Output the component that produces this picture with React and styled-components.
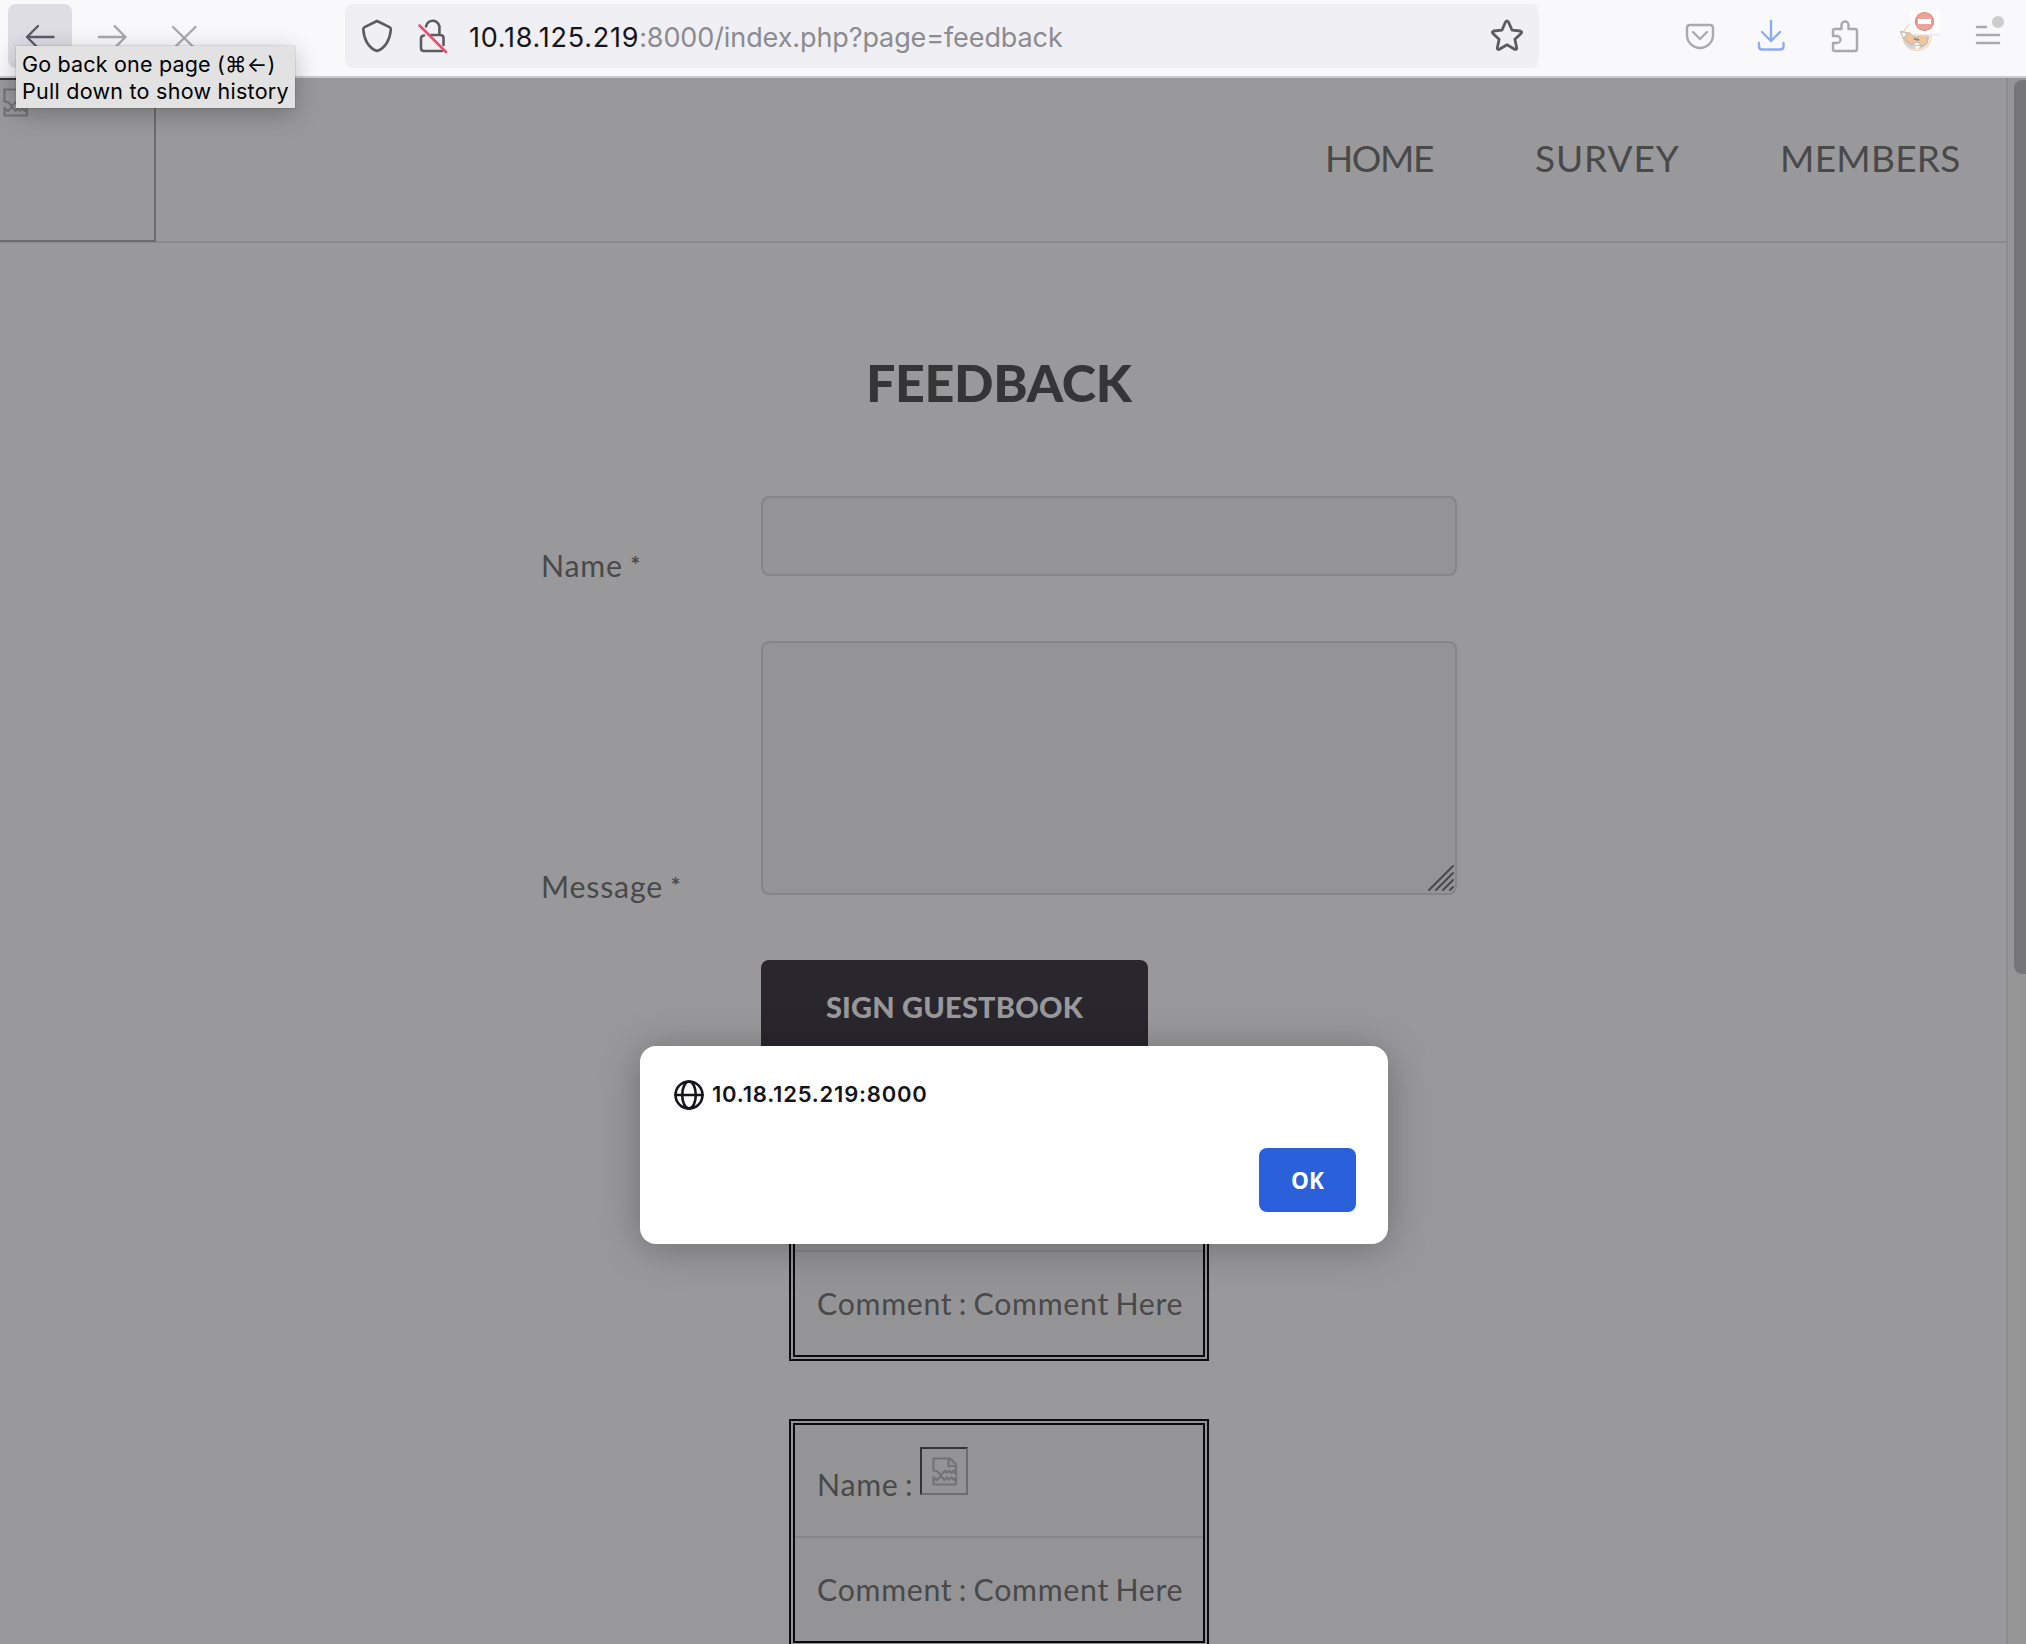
import React from "react";
import styled, { createGlobalStyle } from "styled-components";

const Global = createGlobalStyle`
  * { box-sizing: border-box; }
  html, body { margin: 0; padding: 0; overflow: hidden; }
  body { background: #99999b; }
`;

const ui = `Inter, "Liberation Sans", sans-serif`;
const site = `Lato, "Open Sans", sans-serif`;

const Window = styled.div`
  position: relative;
  display: flex;
  flex-direction: column;
  width: 2026px;
  height: 1644px;
  overflow: hidden;
  background: #99999b;
`;

const Toolbar = styled.div`
  flex: none;
  display: flex;
  height: 78px;
  padding: 4px 0 0 8px;
  background: #f9f9fb;
  border-bottom: 2px solid #cbcbcd;
`;

const NavButton = styled.div`
  flex: none;
  display: flex;
  align-items: center;
  justify-content: center;
  width: 64px;
  height: 64px;
  margin-right: 8px;
  border-radius: 8px;
  background: ${(p) => (p.$active ? "#dedde3" : "transparent")};
  color: ${(p) => (p.$active ? "#5b5b66" : "#a9a9ac")};
`;

const AddressBar = styled.div`
  flex: none;
  display: flex;
  align-items: center;
  width: 1194px;
  height: 64px;
  margin-left: 121px;
  padding: 0 14px 0 14px;
  border-radius: 8px;
  background: #f0eff4;
  color: #5b5b60;
`;

const Url = styled.div`
  flex: 1;
  margin-left: 19px;
  padding-top: 3px;
  white-space: nowrap;
  font: 400 27px/61px ${ui};
  color: #8b8b90;
  letter-spacing: -0.1px;
`;

const Host = styled.span`
  color: #15141a;
  letter-spacing: 0.75px;
`;

const Extensions = styled.div`
  display: flex;
  align-items: center;
  height: 64px;
  margin-left: 137px;
  gap: 24px;
  color: #a9a9ae;
`;

const Glyph = styled.svg`
  display: block;
  flex: none;
  width: ${(p) => p.$size || 48}px;
  height: ${(p) => p.$size || 48}px;
  margin-left: ${(p) => p.$indent || 0}px;
  overflow: visible;
  fill: none;
  color: ${(p) => p.$tone || "inherit"};
  stroke: currentColor;
  stroke-width: ${(p) => p.$weight || 2.4};
  stroke-linecap: round;
  stroke-linejoin: ${(p) => p.$join || "round"};
`;

const Tooltip = styled.div`
  position: absolute;
  left: 16px;
  top: 46px;
  width: 279px;
  height: 62px;
  padding: 5px 0 0 6px;
  background: #e2e2e3;
  box-shadow: 0 0 1px rgba(0, 0, 0, 0.45), 0 6px 24px rgba(0, 0, 0, 0.25);
  font: 400 21.5px/27px ${ui};
  color: #000;
  white-space: nowrap;
`;

const TipLine = styled.div`
  letter-spacing: ${(p) => p.$track};
`;

const Viewport = styled.div`
  flex: 1;
  display: flex;
  min-height: 0;
`;

const Page = styled.div`
  width: 2006px;
  font-family: ${site};
  color: #49494a;
`;

const Scrollbar = styled.div`
  width: 20px;
  padding: 2px 0 0 6px;
  border-left: 2px solid #8c8c8e;
  background: #969697;
`;

const Thumb = styled.div`
  height: 894px;
  width: 20px;
  border-radius: 8px;
  background: #767678;
`;

const Header = styled.header`
  display: flex;
  justify-content: space-between;
  height: 165px;
  border-bottom: 2px solid #89898b;
`;

const Logo = styled.div`
  width: 156px;
  height: 164px;
  padding: 8px 3px;
  border-style: solid;
  border-color: #343435 #6d6d6f #6d6d6f transparent;
  border-width: 2px 2px 2px 0;
`;

const Menu = styled.nav`
  display: flex;
  padding-top: 50px;
`;

const MenuLink = styled.a`
  width: ${(p) => p.$width}px;
  font-size: 37px;
  line-height: 60px;
  letter-spacing: ${(p) => p.$track};
`;

const Title = styled.h1`
  width: 262px;
  margin: 107px 0 0 866px;
  font-size: 52px;
  line-height: 64px;
  font-weight: 900;
  letter-spacing: -0.35px;
  color: #353536;
  white-space: nowrap;
`;

const Form = styled.form`
  display: flex;
  flex-direction: column;
  margin: 82px 0 0 541px;
`;

const Row = styled.div`
  display: flex;
  align-items: flex-end;
  height: ${(p) => p.$height}px;
  margin-bottom: 65px;
`;

const Label = styled.label`
  width: 220px;
  margin-bottom: ${(p) => p.$drop}px;
  font-size: 30.3px;
  line-height: 36px;
  letter-spacing: 0.8px;
  word-spacing: -1px;
`;

const Star = styled.span`
  font-size: 23px;
  font-weight: 700;
  line-height: 1;
  vertical-align: 4px;
`;

const Field = styled.div`
  display: flex;
  align-items: flex-end;
  justify-content: flex-end;
  width: 696px;
  height: 100%;
  padding: 1px;
  border: 2px solid #868688;
  border-radius: 8px;
  background: #949496;
`;

const Submit = styled.div`
  width: 387px;
  height: 96px;
  margin-left: 220px;
  border-radius: 8px;
  background: #29262d;
  color: #99999b;
  text-align: center;
  font-weight: 900;
  font-size: 29px;
  line-height: 94px;
  letter-spacing: 0.2px;
`;

const Entries = styled.section`
  display: flex;
  flex-direction: column;
  gap: 58px;
  margin: 77px 0 0 789px;
`;

const Entry = styled.div`
  width: 420px;
  height: 228px;
  border: 6px double #0b0b0d;
  background: #949496;
  white-space: nowrap;
  font-size: 30.3px;
  letter-spacing: 0.7px;
  word-spacing: -2px;
`;

const EntryName = styled.div`
  display: flex;
  height: 113px;
  padding: 22px 0 0 22px;
  border-bottom: 2px solid #868688;
  line-height: 74px;
`;

const NameText = styled.span`
  width: 96px;
`;

const EntryText = styled.div`
  padding-left: 22px;
  line-height: 102px;
`;

const Broken = styled.div`
  width: 48px;
  height: 48px;
  margin-left: 7px;
  padding: 8px 10px;
  border: 2px solid;
  border-color: #343435 #6d6d6f #6d6d6f #343435;
`;

const Dialog = styled.div`
  position: absolute;
  left: 640px;
  top: 1046px;
  width: 748px;
  height: 198px;
  display: flex;
  flex-direction: column;
  justify-content: space-between;
  padding: 34px 32px 32px 34px;
  border-radius: 16px;
  background: #fff;
  box-shadow: 0 4px 40px rgba(0, 0, 0, 0.28);
`;

const Origin = styled.div`
  display: flex;
  align-items: center;
  gap: 8px;
  height: 30px;
  color: #15141a;
`;

const OriginText = styled.span`
  padding-bottom: 2px;
  font: 600 22px/28px ${ui};
  letter-spacing: 0.8px;
`;

const Ok = styled.div`
  align-self: flex-end;
  width: 97px;
  height: 64px;
  padding-top: 1px;
  border-radius: 8px;
  background: #2a61da;
  color: #fff;
  text-align: center;
  font: 700 22.5px/64px "Open Sans", sans-serif;
`;

const BrokenImage = () => (
  <Glyph $size={28} $weight={2.2} $join="miter" $tone="#737375" viewBox="0 0 28 28">
    <path d="M1.500 13.500V1.500H18l6 6V17l-2.500-3-2 2-2.500-2-2 1.500-2-1.500-4.500 4-3-3.500zM16.500 1.500V9H24" />
    <path d="M1.500 27.500v-7l3.500 2.500 4-4 3.500 4 2.500-2.500 2 2 2.500-2 2 2 2.500-1.500v6.500z" />
  </Glyph>
);

export default function App() {
  return (
    <Window>
      <Global />
      <Toolbar>
        <NavButton $active>
          <Glyph viewBox="0 0 48 48"><path d="M37.500 25H11M22 14L11 25l11 11" /></Glyph>
        </NavButton>
        <NavButton>
          <Glyph viewBox="0 0 48 48"><path d="M11 25h26.500M26.500 14l11 11-11 11" /></Glyph>
        </NavButton>
        <NavButton>
          <Glyph viewBox="0 0 48 48"><path d="M13 15l22.500 22M35.500 15L13 37" /></Glyph>
        </NavButton>
        <AddressBar>
          <Glyph $size={36} viewBox="0 0 36 36" $weight={2.6}>
            <path d="M18 3l12.500 6.200q1.500.8 1.300 2.300C31.200 20.500 27 30 18 33 9 30 4.800 20.500 4.300 11.500q-.2-1.500 1.300-2.300z" />
          </Glyph>
          <Glyph $size={36} $indent={19} viewBox="0 0 36 36" $weight={2.6}>
            <path d="M10 17.500q-3 .3-3 3V30q0 3 3 3h18M17 17h9.500q3 .3 3 3v7M12 8.500a6.600 6.600 0 0 1 13.400 2V17" />
            <path d="M5.500 7.500L32 34" stroke="#e9506e" />
          </Glyph>
          <Url><Host>10.18.125.219</Host>:8000/index.php?page=feedback</Url>
          <Glyph $size={36} viewBox="0 0 36 36" $weight={2.8}>
            <path d="M16.500 4q1.500-2 3 0l3.600 8.200 8.200.8q2.200.6.800 2.400l-6.200 5.800 1.800 8.800q-.2 2.100-2.100 1.300L18 26.800l-7.600 4.500q-1.900.8-2.100-1.300l1.800-8.800-6.200-5.800Q2.500 13.600 4.700 13l8.200-.8z" />
          </Glyph>
        </AddressBar>
        <Extensions>
          <Glyph viewBox="0 0 48 48">
            <path d="M14 13h20q3 0 3 3v7a13 13 0 0 1-26 0v-7q0-3 3-3zM17 20l7 7 7-7" />
          </Glyph>
          <Glyph viewBox="0 0 48 48" $tone="#8fabf0">
            <path d="M23 9v20M14 20l9 9 9-9M11 31v3.500q0 3 3 3h18.500q3 0 3-3V31" />
          </Glyph>
          <Glyph viewBox="0 0 48 48">
            <path d="M13 24v-5q0-2 2-2h6.500v-4a3.500 3.500 0 0 1 7 0v4H35q2 0 2 2v18q0 2-2 2H15q-2 0-2-2v-6h4a3.500 3.500 0 0 0 0-7z" />
          </Glyph>
          <Glyph viewBox="0 0 48 48" $weight={1.2}>
            <circle cx="25" cy="24.500" r="14" stroke="#f5d3ae" fill="#fafafa" />
            <path d="M27 37q9-3 10-13l-6 8z" fill="#c9c9cb" stroke="#c9c9cb" />
            <path d="M12 28q3 8 12 9l-5-6z" fill="#d4d4d6" stroke="#d4d4d6" />
            <path d="M8.500 19.500l9 1.500 7 4 10-5 1 11-5 3-12-1.500-5-4z" fill="#f2c598" stroke="#c4bdb6" />
            <path d="M8.500 19.500l7 2-4 5zM19 32.500l6-2.500 6 4z" fill="#fff" stroke="#c4bdb6" />
            <path d="M22.500 27l4 .8" stroke="#8d8d90" strokeWidth="2" />
            <rect x="19" y="0" width="29" height="23.500" rx="3" fill="#e9e9eb" stroke="none" />
            <rect x="18" y="-2" width="30" height="24" rx="3" fill="#fdfdfd" stroke="none" />
            <circle cx="32.500" cy="9.500" r="9" fill="#eba69c" stroke="#de8479" />
            <rect x="26" y="7" width="13" height="5" rx="0.500" fill="#fff" stroke="none" />
          </Glyph>
          <Glyph viewBox="0 0 48 48">
            <path d="M13 15h9M13 23h22M13 31h22" />
            <circle cx="34" cy="10" r="6" fill="#cdcdcd" stroke="none" />
          </Glyph>
        </Extensions>
      </Toolbar>

      <Viewport>
        <Page>
          <Header>
            <Logo><BrokenImage /></Logo>
            <Menu>
              <MenuLink $width={210} $track="-1.4px">HOME</MenuLink>
              <MenuLink $width={245} $track="0.9px">SURVEY</MenuLink>
              <MenuLink $width={226} $track="0.3px">MEMBERS</MenuLink>
            </Menu>
          </Header>
          <Title>FEEDBACK</Title>
          <Form>
            <Row $height={80}>
              <Label $drop={-7}>Name <Star>*</Star></Label>
              <Field />
            </Row>
            <Row $height={254}>
              <Label $drop={-9}>Message <Star>*</Star></Label>
              <Field>
                <Glyph $size={26} viewBox="0 0 26 26" $weight={2}>
                  <path d="M1 24L25 0M8 24L25 7M15 24l10-10M22 24l3-3" />
                </Glyph>
              </Field>
            </Row>
            <Submit>SIGN GUESTBOOK</Submit>
          </Form>
          <Entries>
            {[0, 1].map((n) => (
              <Entry key={n}>
                <EntryName><NameText>Name :</NameText><Broken><BrokenImage /></Broken></EntryName>
                <EntryText>Comment : Comment Here</EntryText>
              </Entry>
            ))}
          </Entries>
        </Page>
        <Scrollbar><Thumb /></Scrollbar>
      </Viewport>

      <Dialog>
        <Origin>
          <Glyph $size={30} viewBox="0 0 30 30" $weight={2.6}>
            <circle cx="15" cy="15" r="13.500" />
            <ellipse cx="15" cy="15" rx="6.800" ry="13.500" />
            <path d="M1.500 15h27" />
          </Glyph>
          <OriginText>10.18.125.219:8000</OriginText>
        </Origin>
        <Ok>OK</Ok>
      </Dialog>

      <Tooltip>
        <TipLine $track="0.18px">Go back one page (⌘←)</TipLine>
        <TipLine $track="0.26px">Pull down to show history</TipLine>
      </Tooltip>
    </Window>
  );
}
